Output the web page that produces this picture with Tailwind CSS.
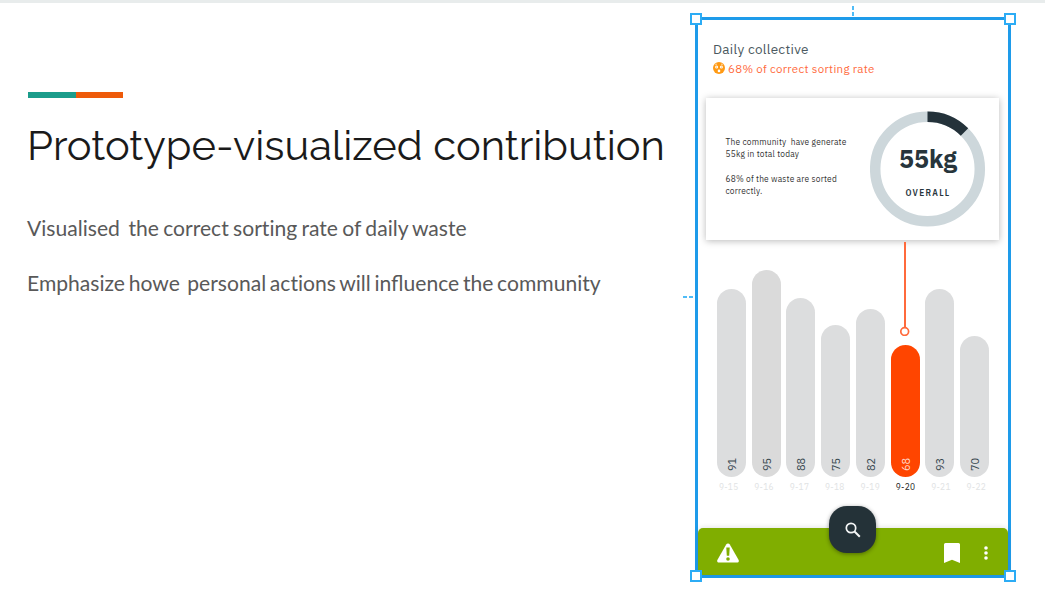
<!DOCTYPE html>
<html lang="en">
<head>
<meta charset="utf-8">
<title>Prototype-visualized contribution</title>
<script src="https://cdn.jsdelivr.net/npm/@tailwindcss/browser@4"></script>
</head>
<body class="h-[589px] w-[1045px] overflow-hidden border-t-3 border-[#e8ecec] bg-white font-['Lato',sans-serif]">
<main class="flex">
  <section class="w-[695px] shrink-0 pt-[89px] pl-7 whitespace-nowrap">
    <div class="flex h-1.5 w-[95px]"><div class="flex-1 bg-[#1b9c8b]"></div><div class="flex-1 bg-[#ee5a0a]"></div></div>
    <h1 class="mt-[22px] -ml-px text-[41.65px] leading-[52px] font-normal text-[#1a1a1a] font-['Raleway','Lato',sans-serif]"><span>Prototype-visualized contribution</span></h1>
    <p class="mt-[42px] -ml-px text-[21.1px] leading-[28px] [word-spacing:-1.1px] whitespace-pre text-[#595959]">Visualised  the correct <span class="[font-variant-ligatures:none]">sorting</span> rate of daily waste</p>
    <p class="mt-[27px] -ml-px text-[21.1px] leading-[28px] [word-spacing:-1.7px] whitespace-pre text-[#595959]">Emphasize howe  personal <span class="[font-variant-ligatures:none]">actions</span> will influence the community</p>
  </section>

  <section class="relative mt-[14px] flex h-[561px] w-[316px] shrink-0 flex-col border-3 border-[#1e9bea] bg-white font-['IBM_Plex_Sans','Roboto',sans-serif]">
    <header class="h-[78px] pt-[20px] pl-[15px] whitespace-nowrap">
      <h2 class="text-[13.5px] leading-[18px] tracking-[0.3px] text-[#4b5960]"><span>Daily collective</span></h2>
      <div class="mt-[2px] flex h-[18px] items-center gap-[3px] text-[11.5px] tracking-[0.3px] text-[#ff6a3c]">
        <svg class="-mt-0.5 size-3 shrink-0" viewBox="0 0 12 12"><circle cx="6" cy="6" r="6" fill="#ff9a14"/><circle cx="3.6" cy="5" r="1.5" fill="#fff"/><circle cx="8.4" cy="5" r="1.5" fill="#fff"/><circle cx="3.6" cy="5" r=".5" fill="#ff9a14"/><circle cx="8.4" cy="5" r=".5" fill="#ff9a14"/><circle cx="6" cy="8.9" r="1.3" fill="#fff"/><path d="M2.2 2.8 4 2M8 2l1.8.8" stroke="#fff" stroke-width=".6"/></svg>
        <span>68% of correct sorting rate</span>
      </div>
    </header>

    <article class="ml-2 flex h-[142px] w-[293px] shrink-0 bg-white shadow-[0_1px_7px_rgba(0,0,0,0.28)]">
      <div class="w-[164px] pt-[38px] pl-[19.5px] text-[8.4px] leading-[12.3px] tracking-[0.2px] text-[#333]">
        <p class="whitespace-pre">The community  have generate<br>55kg in total today</p>
        <p class="mt-[12px]">68% of the waste are sorted<br>correctly.</p>
      </div>
      <div class="grid pt-[13px]">
        <svg class="col-start-1 row-start-1 size-[116px]" viewBox="0 0 116 116" fill="none" stroke-width="10.5"><circle cx="57.5" cy="58" r="52.3" stroke="#cdd7db"/><path d="M57.5 5.7A52.3 52.3 0 0 1 94.5 21" stroke="#24323a"/></svg>
        <div class="col-start-1 row-start-1 flex h-[116px] flex-col items-center pt-[32px] text-[#27353c]">
          <b class="text-[25px] leading-[32px] font-bold">55kg</b>
          <b class="mt-[12px] text-[8.4px] leading-[12px] font-semibold tracking-[1.25px]">OVERALL</b>
        </div>
      </div>
    </article>

    <div class="ml-[19px] flex h-[237px] w-[272px] shrink-0 items-end justify-between text-[11px] text-[#37474f]">
      <div class="flex h-[188px] w-[29px] items-center rounded-full bg-[#dcddde] pt-[6px] pr-[2px] rotate-180 [writing-mode:vertical-rl]"><span>91</span></div>
      <div class="flex h-[207px] w-[29px] items-center rounded-full bg-[#dadada] pt-[6px] pr-[2px] rotate-180 [writing-mode:vertical-rl]"><span>95</span></div>
      <div class="flex h-[179px] w-[29px] items-center rounded-full bg-[#dcddde] pt-[6px] pr-[2px] rotate-180 [writing-mode:vertical-rl]"><span>88</span></div>
      <div class="flex h-[152px] w-[29px] items-center rounded-full bg-[#dcddde] pt-[6px] pr-[2px] rotate-180 [writing-mode:vertical-rl]"><span>75</span></div>
      <div class="flex h-[168px] w-[29px] items-center rounded-full bg-[#dcddde] pt-[6px] pr-[2px] rotate-180 [writing-mode:vertical-rl]"><span>82</span></div>
      <div class="flex h-[132px] w-[29px] items-center rounded-full bg-[#ff4500] pt-[6px] pr-[2px] text-[#ffd9cc] rotate-180 [writing-mode:vertical-rl]"><span>68</span></div>
      <div class="flex h-[188px] w-[29px] items-center rounded-full bg-[#dcddde] pt-[6px] pr-[2px] rotate-180 [writing-mode:vertical-rl]"><span>93</span></div>
      <div class="flex h-[141px] w-[29px] items-center rounded-full bg-[#dcddde] pt-[6px] pr-[2px] rotate-180 [writing-mode:vertical-rl]"><span>70</span></div>
    </div>
    <div class="mt-[4px] ml-[13px] grid h-3 w-[283px] shrink-0 grid-cols-8 text-center text-[8.4px] leading-3 tracking-[0.3px] whitespace-nowrap text-[#e1e3e4]">
      <span>9-15</span><span>9-16</span><span>9-17</span><span>9-18</span><span>9-19</span><span class="text-[#222]">9-20</span><span>9-21</span><span>9-22</span>
    </div>

    <nav class="mt-auto flex h-[47px] shrink-0 items-center rounded-t-[5px] bg-[#80ae00] pl-[19px] shadow-[0_-1px_5px_rgba(0,0,0,0.10)]">
      <svg class="mt-0.5 h-5 w-[22px]" viewBox="0 0 22 20"><path d="M9.2 1.5a2.1 2.1 0 0 1 3.6 0l8.7 15.2c.8 1.5.1 2.8-1.6 2.8H2.1C.4 19.5-.3 18.2.5 16.7Z" fill="#fff"/><path d="M9.3 4.5h3.4l-.5 8.2H9.8Z" fill="#80ae00"/><circle cx="11" cy="16" r="1.8" fill="#80ae00"/></svg>
      <svg class="mt-0.5 ml-[205px] h-5 w-4" viewBox="0 0 16 20"><path d="M1.5 0h13A1.5 1.5 0 0 1 16 1.5V20l-8-3.3L0 20V1.5A1.5 1.5 0 0 1 1.5 0Z" fill="#fff"/></svg>
      <svg class="mt-0.5 ml-[24px] h-[14px] w-1" viewBox="0 0 4 14" fill="#fff"><circle cx="2" cy="2" r="1.8"/><circle cx="2" cy="7" r="1.8"/><circle cx="2" cy="12" r="1.8"/></svg>
    </nav>

    <svg class="absolute top-[222px] left-[202px] h-[94px] w-[10px]" viewBox="0 0 10 94" fill="none" stroke="#ff6a3c"><path d="M5 0v85" stroke-width="2"/><circle cx="4.7" cy="89.5" r="3.9" stroke-width="1.7" fill="#fff"/></svg>
    <div class="absolute top-[486px] left-[131px] flex size-[47px] items-center justify-center rounded-[18px] bg-[#243238] shadow-[0_1px_4px_rgba(0,0,0,0.4)]">
      <svg class="size-4" viewBox="0 0 16 16" fill="none" stroke="#f4f6f6"><circle cx="6" cy="6" r="4.7" stroke-width="1.7"/><path d="m9.5 9.500 5.300 5.300" stroke-width="2"/></svg>
    </div>

    <i class="absolute -top-[7px] -left-[8px] size-3 border-2 border-[#2cacf5] bg-white"></i>
    <i class="absolute -top-[7px] -right-[8px] size-3 border-2 border-[#2cacf5] bg-white"></i>
    <i class="absolute -bottom-[7px] -left-[8px] size-3 border-2 border-[#2cacf5] bg-white"></i>
    <i class="absolute -right-[8px] -bottom-[7px] size-3 border-2 border-[#2cacf5] bg-white"></i>
    <svg class="absolute -top-[14px] left-[154px] h-[10px] w-[2px]" viewBox="0 0 2 10" fill="#4fbcf7"><path d="M0 0h2v4H0zM0 6h2v4H0z"/></svg>
    <svg class="absolute top-[276px] -left-[15px] h-[2px] w-[10px]" viewBox="0 0 10 2" fill="#4fbcf7"><path d="M0 0h4v2H0zM6 0h4v2H6z"/></svg>
  </section>
</main>
</body>
</html>
